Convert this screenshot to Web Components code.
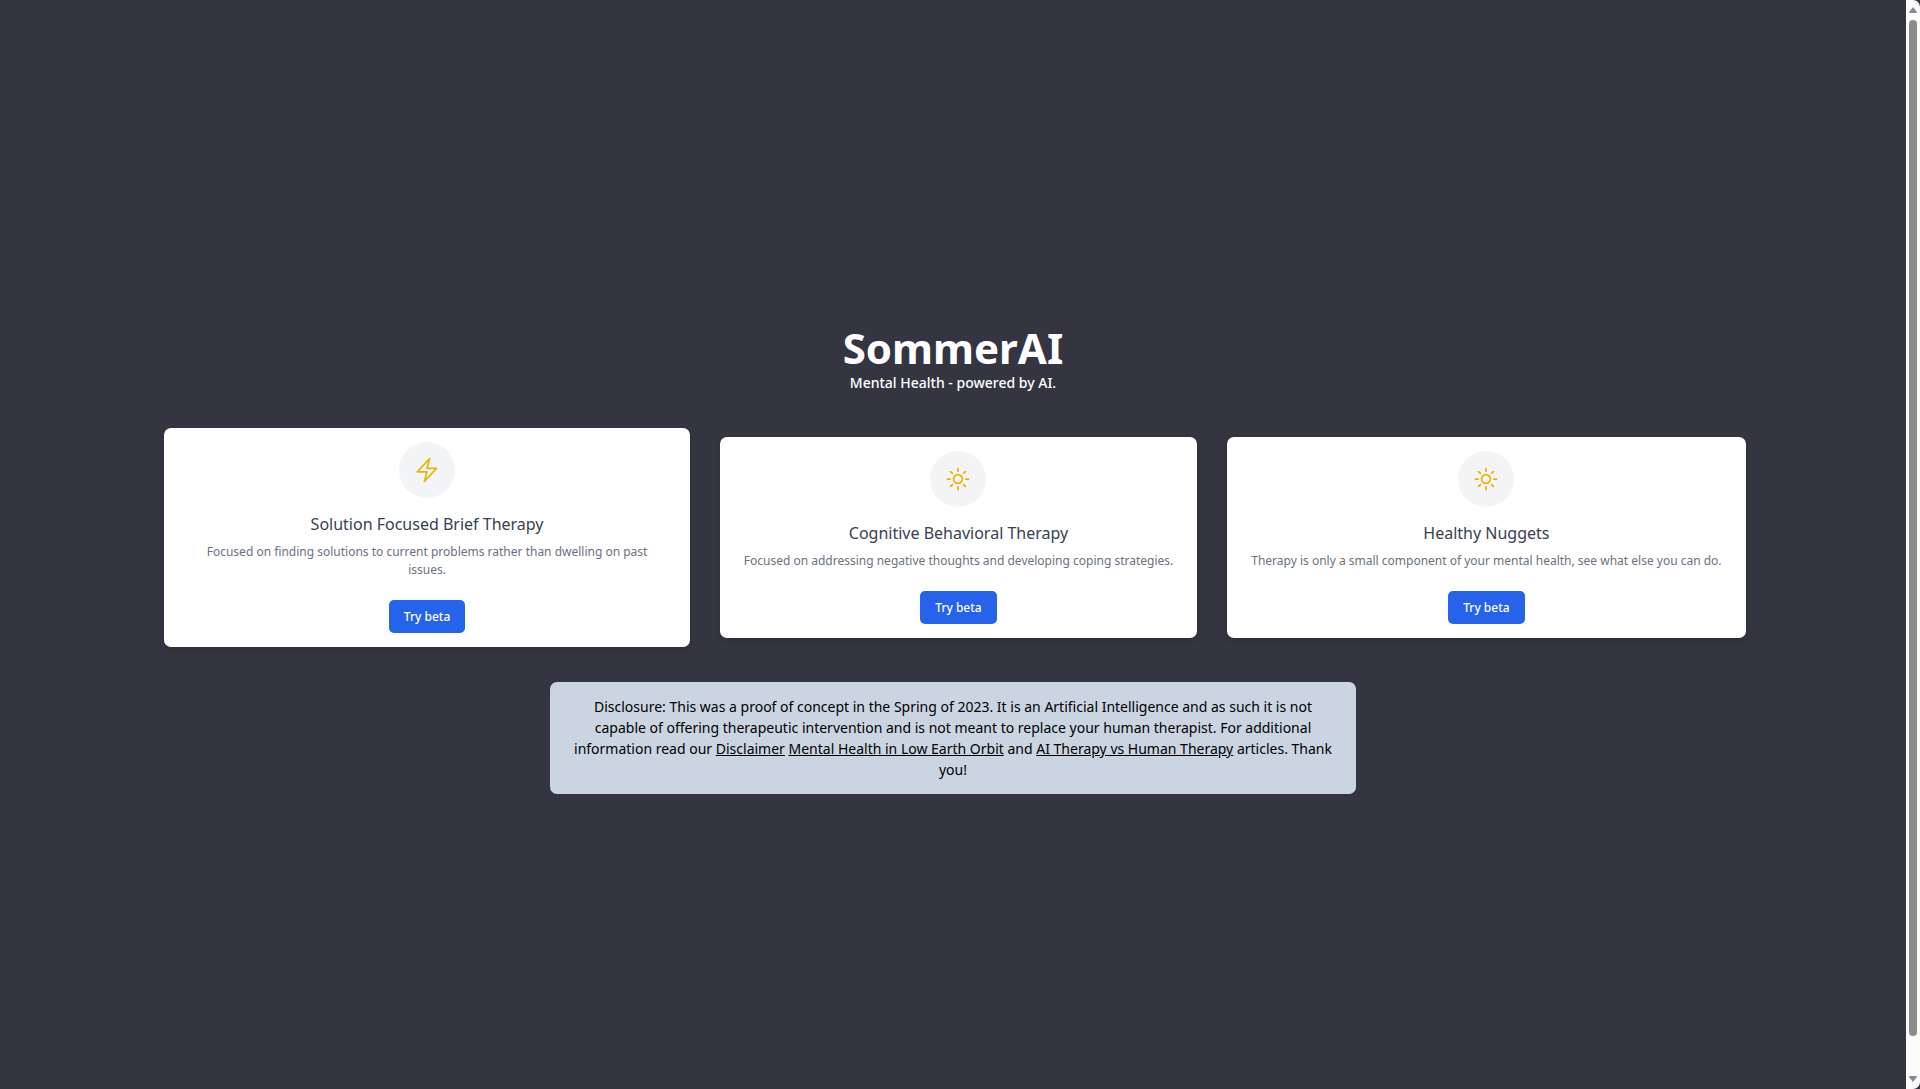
<!DOCTYPE html>
<html lang="en">
<head>
<meta charset="UTF-8">
<meta name="viewport" content="width=device-width, initial-scale=1.0">
<title>SommerAI</title>
<style>
    body {
        margin: 0;
        background: #343541;
        font-family: "Noto Sans", "Open Sans", sans-serif;
    }
</style>
</head>
<body>
<sommer-app>
    <sommer-header slot="header">
        SommerAI
        <span slot="tagline">Mental Health - powered by AI.</span>
    </sommer-header>
    <therapy-card icon="bolt" featured>
        <span slot="title">Solution Focused Brief Therapy</span>
        Focused on finding solutions to current problems rather than dwelling on past issues.
    </therapy-card>
    <therapy-card icon="sun">
        <span slot="title">Cognitive Behavioral Therapy</span>
        Focused on addressing negative thoughts and developing coping strategies.
    </therapy-card>
    <therapy-card icon="sun">
        <span slot="title">Healthy Nuggets</span>
        Therapy is only a small component of your mental health, see what else you can do.
    </therapy-card>
    <disclosure-note slot="footer"></disclosure-note>
</sommer-app>

<script>
const ICONS = {
    bolt: 'M3.75 13.5l10.5-11.25L12 10.5h8.25L9.75 21.75 12 13.5H3.75z',
    sun: 'M12 3v2.25m6.364.386l-1.591 1.591M21 12h-2.25m-.386 6.364l-1.591-1.591M12 18.75V21m-4.773-4.227l-1.591 1.591M5.25 12H3m4.227-4.773L5.636 5.636M15.75 12a3.75 3.75 0 11-7.5 0 3.75 3.75 0 017.5 0z'
};

class SommerApp extends HTMLElement {
    constructor() {
        super();
        this.attachShadow({ mode: 'open' });
        this.shadowRoot.innerHTML = `
            <style>
                :host {
                    display: grid;
                    grid-template-columns: 1fr 14px;
                    min-height: 100vh;
                }
                main {
                    display: flex;
                    flex-direction: column;
                    align-items: center;
                    justify-content: center;
                    gap: 35px;
                    padding-top: 29px;
                }
                .cards {
                    display: grid;
                    grid-template-columns: 526fr 477fr 519fr;
                    align-items: center;
                    gap: 30px;
                    box-sizing: border-box;
                    width: 83.2%;
                    padding-left: 4px;
                }
                ::slotted([slot="footer"]) {
                    width: 42.3%;
                }
            </style>
            <main>
                <slot name="header"></slot>
                <div class="cards"><slot></slot></div>
                <slot name="footer"></slot>
            </main>
            <page-scrollbar></page-scrollbar>
        `;
    }
}

class SommerHeader extends HTMLElement {
    constructor() {
        super();
        this.attachShadow({ mode: 'open' });
        this.shadowRoot.innerHTML = `
            <style>
                :host {
                    display: block;
                    color: #fff;
                    text-align: center;
                }
                h1 {
                    margin: 0;
                    font-size: 42px;
                    font-weight: 700;
                    line-height: 48px;
                }
                p {
                    margin: 0;
                    font-size: 14px;
                    font-weight: 500;
                    line-height: 21px;
                }
            </style>
            <h1><slot></slot></h1>
            <p><slot name="tagline"></slot></p>
        `;
    }
}

class TherapyCard extends HTMLElement {
    constructor() {
        super();
        this.attachShadow({ mode: 'open' });
    }

    connectedCallback() {
        this.shadowRoot.innerHTML = `
            <style>
                :host {
                    display: flex;
                    flex-direction: column;
                    align-items: center;
                    padding: 14px;
                    border-radius: 7px;
                    background: #fff;
                    text-align: center;
                    box-shadow: 0 4px 6px rgba(0,0,0,0.1);
                }
                :host([featured]) {
                    padding: 14px 28px;
                }
                .icon {
                    display: flex;
                    align-items: center;
                    justify-content: center;
                    width: 56px;
                    height: 56px;
                    border-radius: 50%;
                    background: #f3f4f6;
                    color: #eab308;
                }
                h2 {
                    margin: 14px 0 7px;
                    color: #374151;
                    font-size: 16px;
                    font-weight: 400;
                    line-height: 24px;
                }
                p {
                    margin: 0 0 21px;
                    color: #6b7280;
                    font-size: 12px;
                    line-height: 18px;
                }
                button {
                    padding: 7px 15px;
                    border: none;
                    border-radius: 5px;
                    background: #2563eb;
                    color: #fff;
                    font-family: inherit;
                    font-size: 12px;
                    font-weight: 500;
                    line-height: 19px;
                    cursor: pointer;
                }
            </style>
            <div class="icon">
                <svg width="28" height="28" viewBox="0 0 24 24" fill="none" stroke="currentColor" stroke-width="1.5" stroke-linecap="round" stroke-linejoin="round" aria-hidden="true">
                    <path d="${ICONS[this.getAttribute('icon')]}"/>
                </svg>
            </div>
            <h2><slot name="title"></slot></h2>
            <p><slot></slot></p>
            <button type="button">Try beta</button>
        `;
    }
}

class DisclosureNote extends HTMLElement {
    constructor() {
        super();
        this.attachShadow({ mode: 'open' });
        this.shadowRoot.innerHTML = `
            <style>
                :host {
                    display: block;
                    box-sizing: border-box;
                    padding: 14px 21px;
                    border-radius: 7px;
                    background: #cbd5e1;
                    color: #000;
                    font-size: 14px;
                    line-height: 21px;
                    text-align: center;
                }
                p {
                    margin: 0;
                }
                a {
                    color: inherit;
                    text-decoration: underline;
                }
            </style>
            <p>
                Disclosure: This was a proof of concept in the Spring of 2023. It is an Artificial Intelligence and as such it is not capable of offering therapeutic intervention and is not meant to replace your human therapist. For additional information read our
                <a href="#disclaimer">Disclaimer</a>
                <a href="#orbit">Mental Health in Low Earth Orbit</a>
                and
                <a href="#articles">AI Therapy vs Human Therapy</a>
                articles. Thank you!
            </p>
        `;
    }
}

class PageScrollbar extends HTMLElement {
    constructor() {
        super();
        this.attachShadow({ mode: 'open' });
        this.shadowRoot.innerHTML = `
            <style>
                :host {
                    display: flex;
                    flex-direction: column;
                    align-items: center;
                    gap: 7px;
                    box-sizing: border-box;
                    height: 100vh;
                    padding: 7px 0;
                    border-radius: 0 7px 7px 0;
                    background: #fcfcfc;
                    color: #8b8b8b;
                }
                .track {
                    flex: 1;
                    padding-bottom: 33px;
                    display: flex;
                }
                .thumb {
                    width: 8px;
                    border-radius: 4px;
                    background: currentColor;
                }
            </style>
            <svg width="8" height="6" viewBox="0 0 8 6" aria-hidden="true"><path d="M4 0L8 5Q8 6 7 6H1Q0 6 0 5Z" fill="currentColor"/></svg>
            <div class="track"><div class="thumb"></div></div>
            <svg width="8" height="6" viewBox="0 0 8 6" aria-hidden="true"><path d="M4 6L8 1Q8 0 7 0H1Q0 0 0 1Z" fill="currentColor"/></svg>
        `;
    }
}

customElements.define('page-scrollbar', PageScrollbar);
customElements.define('sommer-header', SommerHeader);
customElements.define('therapy-card', TherapyCard);
customElements.define('disclosure-note', DisclosureNote);
customElements.define('sommer-app', SommerApp);
</script>
</body>
</html>
